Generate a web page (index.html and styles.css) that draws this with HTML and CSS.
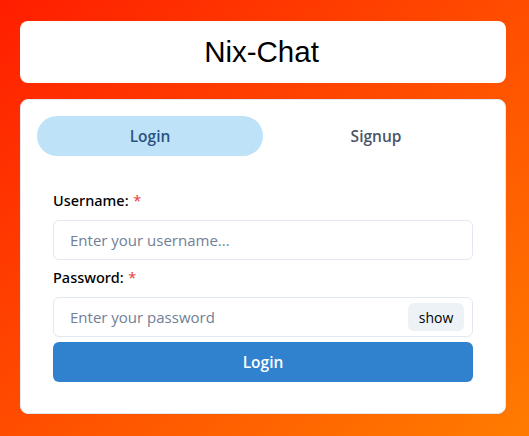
FILE: index.html
```html
<!DOCTYPE html>
<html>
<head>
<meta charset="utf-8">
<link rel="stylesheet" href="styles.css">
</head>
<body>
<div class="container">
  <div class="header"><span class="brand">Nix-Chat</span></div>
  <div class="card">
    <div class="tablist">
      <div class="tab active">Login</div>
      <div class="tab">Signup</div>
    </div>
    <div class="panel">
      <form class="form">
        <label class="label">Username: <span class="req">*</span></label>
        <div class="input"><span class="ph">Enter your username...</span></div>
        <label class="label lbl2">Password: <span class="req">*</span></label>
        <div class="input pw"><span class="ph">Enter your password</span><span class="show">show</span></div>
        <div class="submit">Login</div>
      </form>
    </div>
  </div>
</div>
</body>
</html>
```
FILE: styles.css
```css
html, body { margin: 0; padding: 0; }
body {
  width: 529px; height: 436px; overflow: hidden;
  background: linear-gradient(to bottom right, #ff1e00, #ff7c00);
  font-family: "Open Sans", "Noto Sans", sans-serif;
  color: #1a202c;
}
.container { padding: 21px 0 0 20px; width: 486px; }
.header {
  background: #fff; border-radius: 8px; height: 62px;
  display: flex; align-items: center; justify-content: center;
  box-sizing: border-box;
}
.brand { font-family: "Liberation Sans", Arial, sans-serif; font-size: 29.5px; color: #000; line-height: 36px; margin-left: -3px; }
.card {
  margin-top: 16px; background: #fff; border-radius: 8px; border: 1px solid #e2e8f0;
  padding: 16px; height: 315px; box-sizing: border-box;
}
.tablist { display: flex; margin-bottom: 16px; }
.tab {
  flex: 1; height: 40px; border-radius: 20px; display: flex; align-items: center; justify-content: center;
  font-weight: 600; font-size: 15.5px; color: #4a5568;
}
.tab.active { background: #bee3f8; color: #2c5282; }
.panel { padding: 16px; }
.form { display: flex; flex-direction: column; }
.label { font-family: "Noto Sans", "Open Sans", sans-serif; font-size: 14.5px; font-weight: 500; line-height: 24px; margin-bottom: 8px; color: #000; }
.lbl2 { margin-top: 5px; }
.req { color: #e53e3e; font-weight: 400; margin-left: 1px; }
.input {
  height: 40px; box-sizing: border-box; border: 1px solid #e2e8f0; border-radius: 6px;
  display: flex; align-items: center; padding-left: 16px; font-size: 15px;
}
.ph { color: #718096; flex: 1; }
.show {
  background: #edf2f7; border-radius: 6px; height: 28px; width: 56px; margin-right: 8px;
  display: flex; align-items: center; justify-content: center; font-size: 14px; font-weight: 500; color: #000;
}
.submit {
  margin-top: 5px; height: 40px; border-radius: 6px; background: #3182ce; color: #fff;
  display: flex; align-items: center; justify-content: center; font-weight: 600; font-size: 15.5px;
}
```
